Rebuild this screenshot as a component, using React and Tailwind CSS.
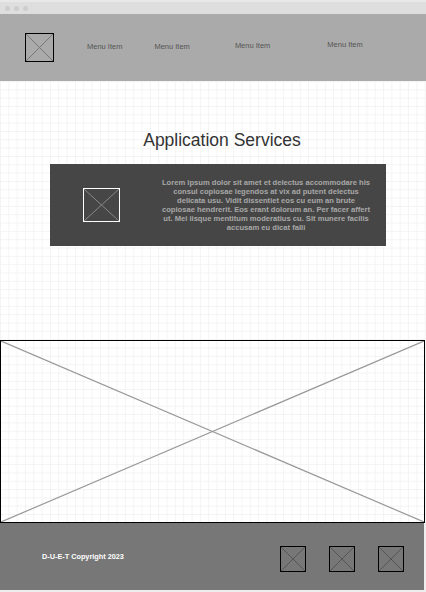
import React from "react";

function XBox({ className = "", stroke = "#666", sw = 1 }) {
  return (
    <div className={className}>
      <svg width="100%" height="100%" viewBox="0 0 100 100" preserveAspectRatio="none" className="block">
        <line x1="0" y1="0" x2="100" y2="100" stroke={stroke} strokeWidth={sw} vectorEffect="non-scaling-stroke" />
        <line x1="100" y1="0" x2="0" y2="100" stroke={stroke} strokeWidth={sw} vectorEffect="non-scaling-stroke" />
      </svg>
    </div>
  );
}

export default function App() {
  return (
    <div className="w-[426px] h-[592px] overflow-hidden bg-[#eeeeee] flex flex-col font-['Liberation_Sans',Arial,sans-serif]">
      {/* browser bar */}
      <div className="h-[14px] shrink-0 bg-[#dedede] border-t-2 border-[#e8e8e8] flex items-center gap-[4px] pl-[5px]">
        <span className="w-[5px] h-[5px] rounded-full bg-[#cdcdcd]" />
        <span className="w-[5px] h-[5px] rounded-full bg-[#cdcdcd]" />
        <span className="w-[5px] h-[5px] rounded-full bg-[#cdcdcd]" />
      </div>

      {/* header */}
      <div className="h-[67px] shrink-0 bg-[#aaaaaa] flex items-center">
        <XBox className="ml-[25px] w-[29px] h-[29px] border border-black box-border" stroke="#777" />
        <span className="ml-[33px] text-[7.5px] text-[#555] leading-none -mt-[2px]">Menu Item</span>
        <span className="ml-[32px] text-[7.5px] text-[#555] leading-none -mt-[2px]">Menu Item</span>
        <span className="ml-[45px] text-[7.5px] text-[#555] leading-none -mt-[4px]">Menu Item</span>
        <span className="ml-[57px] text-[7.5px] text-[#555] leading-none -mt-[6px]">Menu Item</span>
      </div>

      {/* body with grid */}
      <div className="shrink-0 w-[426px] bg-white bg-[linear-gradient(#f3f3f3_1px,transparent_1px),linear-gradient(90deg,#f3f3f3_1px,transparent_1px)] bg-[size:8.33px_8.33px] flex flex-col">
        <div className="h-[259px] flex flex-col items-center">
          <h1 className="mt-[49px] ml-[18px] text-[17.5px] leading-[20px] text-[#333] font-normal">Application Services</h1>
          <div className="mt-[14px] ml-[10px] w-[336px] h-[82px] bg-[#464646] flex items-center">
            <XBox className="ml-[33px] w-[37px] h-[34px] border border-white box-border" stroke="#888" />
            <p className="ml-[40px] w-[212px] text-center text-[7.6px] leading-[9px] font-bold text-[#a8a8a8]">
              Lorem ipsum dolor sit amet et delectus accommodare his consul copiosae legendos at vix ad putent delectus delicata usu. Vidit dissentiet eos cu eum an brute copiosae hendrerit. Eos erant dolorum an. Per facer affert ut. Mei iisque mentitum moderatius cu. Sit munere facilis accusam eu dicat falli
            </p>
          </div>
        </div>
        <XBox className="w-[425px] h-[183px] border border-black box-border" stroke="#999" sw={1.2} />
      </div>

      {/* footer */}
      <div className="h-[67px] w-[424px] shrink-0 bg-[#777777] flex items-center">
        <span className="ml-[42px] text-[7.3px] font-bold text-white leading-none">D-U-E-T Copyright 2023</span>
        <div className="ml-auto mr-[20px] mt-[5px] flex gap-[23px]">
          <XBox className="w-[26px] h-[26px] border border-black box-border" stroke="#555" />
          <XBox className="w-[26px] h-[26px] border border-black box-border" stroke="#555" />
          <XBox className="w-[26px] h-[26px] border border-black box-border" stroke="#555" />
        </div>
      </div>
    </div>
  );
}
